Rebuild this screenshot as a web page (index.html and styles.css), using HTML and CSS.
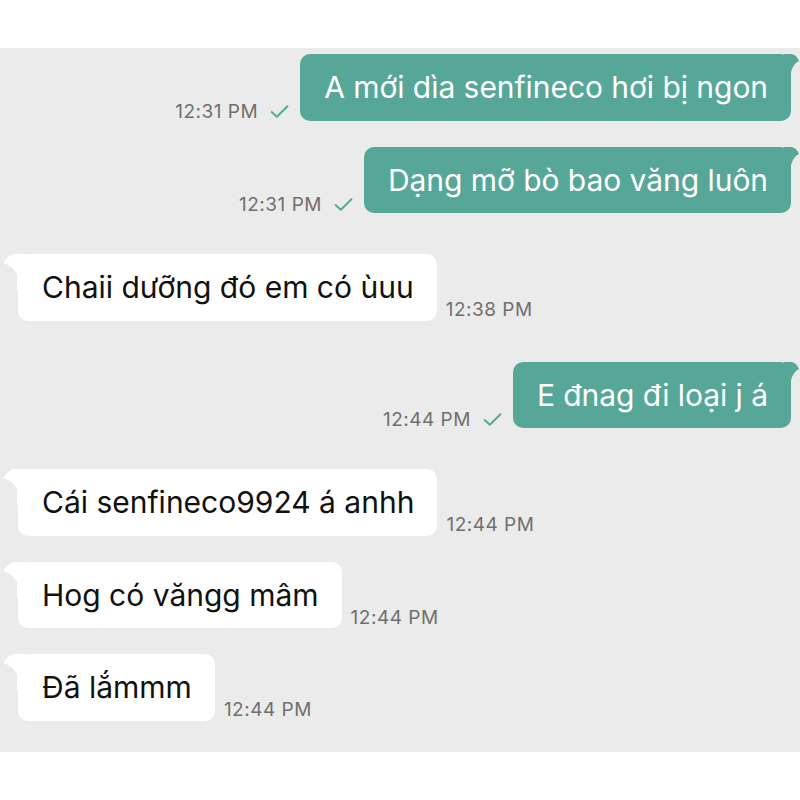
FILE: index.html
```html
<!DOCTYPE html>
<html>
<head>
<meta charset="utf-8">
<link rel="stylesheet" href="styles.css">
</head>
<body>
<div class="top"></div>
<div class="chat">
  <div class="row out">
    <div class="meta"><span class="time">12:31 PM</span><svg class="check" viewBox="0 0 18 14"><path d="M1.5 7.5 L6.5 12 L16.5 2" /></svg></div>
    <div class="bubble">A mới dìa senfineco hơi bị ngon<svg class="tail" viewBox="0 0 16 28"><path d="M0 0 H7 Q12 0 15 7 Q9 10 7 18 L7 28 H0 Z"/></svg></div>
  </div>
  <div class="row out same">
    <div class="meta"><span class="time">12:31 PM</span><svg class="check" viewBox="0 0 18 14"><path d="M1.5 7.5 L6.5 12 L16.5 2" /></svg></div>
    <div class="bubble">Dạng mỡ bò bao văng luôn<svg class="tail" viewBox="0 0 16 28"><path d="M0 0 H7 Q12 0 15 7 Q9 10 7 18 L7 28 H0 Z"/></svg></div>
  </div>
  <div class="row in">
    <div class="bubble">Chaii dưỡng đó em có ùuu<svg class="tail" viewBox="0 0 22 36"><path d="M22 0 H12 Q6 0 0 9 Q10 12 14 20 L14 36 H22 Z"/></svg></div>
    <div class="meta"><span class="time">12:38 PM</span></div>
  </div>
  <div class="row out">
    <div class="meta"><span class="time">12:44 PM</span><svg class="check" viewBox="0 0 18 14"><path d="M1.5 7.5 L6.5 12 L16.5 2" /></svg></div>
    <div class="bubble">E đnag đi loại j á<svg class="tail" viewBox="0 0 16 28"><path d="M0 0 H7 Q12 0 15 7 Q9 10 7 18 L7 28 H0 Z"/></svg></div>
  </div>
  <div class="row in">
    <div class="bubble">Cái senfineco9924 á anhh<svg class="tail" viewBox="0 0 22 36"><path d="M22 0 H12 Q6 0 0 9 Q10 12 14 20 L14 36 H22 Z"/></svg></div>
    <div class="meta"><span class="time">12:44 PM</span></div>
  </div>
  <div class="row in same">
    <div class="bubble">Hog có văngg mâm<svg class="tail" viewBox="0 0 22 36"><path d="M22 0 H12 Q6 0 0 9 Q10 12 14 20 L14 36 H22 Z"/></svg></div>
    <div class="meta"><span class="time">12:44 PM</span></div>
  </div>
  <div class="row in same">
    <div class="bubble">Đã lắmmm<svg class="tail" viewBox="0 0 22 36"><path d="M22 0 H12 Q6 0 0 9 Q10 12 14 20 L14 36 H22 Z"/></svg></div>
    <div class="meta"><span class="time">12:44 PM</span></div>
  </div>
</div>
</body>
</html>
```

FILE: styles.css
```css
html, body {
  margin: 0;
  padding: 0;
  background: #ffffff;
}
body {
  font-family: "Inter", "Noto Sans", "Liberation Sans", sans-serif;
}
.top {
  height: 48px;
}
.chat {
  background: #ebebeb;
  height: 704px;
  box-sizing: border-box;
  padding: 6px 9px 0 18px;
  display: flex;
  flex-direction: column;
}
.row {
  display: flex;
  align-items: flex-end;
  margin-top: 41px;
}
.row:first-child {
  margin-top: 0;
}
.row.same {
  margin-top: 26px;
}
.row.out {
  justify-content: flex-end;
}
.bubble {
  position: relative;
  height: 66.5px;
  box-sizing: border-box;
  padding: 0 23px 0 24px;
  display: flex;
  align-items: center;
  font-size: 30px;
  border-radius: 10px;
  white-space: nowrap;
}
.out .bubble {
  background: #56a797;
  color: #ffffff;
  letter-spacing: -0.05px;
}
.in .bubble {
  background: #ffffff;
  color: #111111;
}
.tail {
  position: absolute;
  top: 0;
}
.out .tail {
  right: -9px;
  width: 16px;
  height: 28px;
  fill: #56a797;
}
.in .tail {
  left: -15px;
  width: 22px;
  height: 36px;
  fill: #ffffff;
}
.meta {
  display: flex;
  align-items: center;
  height: 20px;
}
.out .meta {
  margin-right: 11px;
  margin-bottom: -1px;
}
.in .meta {
  margin-left: 9px;
  margin-bottom: 1px;
}
.time {
  font-size: 19px;
  color: #6f6f6f;
  letter-spacing: 0.5px;
}
.check {
  width: 19px;
  height: 15px;
  margin-left: 12px;
  fill: none;
  stroke: #56a797;
  stroke-width: 1.8;
  stroke-linecap: round;
  stroke-linejoin: round;
}
```
